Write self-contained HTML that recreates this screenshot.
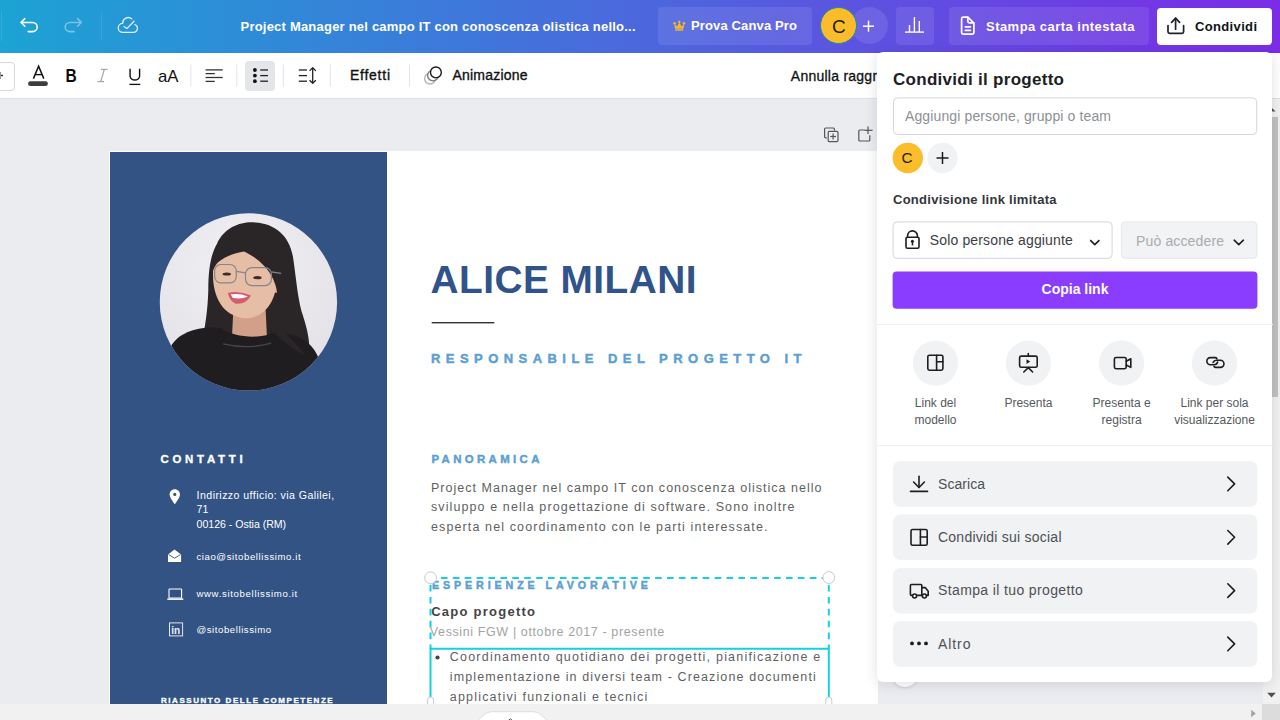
<!DOCTYPE html>
<html><head><meta charset="utf-8">
<style>
*{margin:0;padding:0;box-sizing:border-box}
html,body{width:1280px;height:720px;overflow:hidden;background:#ebecf0;font-family:"Liberation Sans",sans-serif;position:relative}
.a{position:absolute}
.t{position:absolute;white-space:nowrap;line-height:1}
#hdr{left:0;top:0;width:1280px;height:53px;background:linear-gradient(90deg,#1ca3d4 0%,#7b2ce6 100%)}
#tb{left:0;top:53px;width:1280px;height:46px;background:#fff;border-bottom:1px solid #dde1e4}
.hbtn{position:absolute;top:6.8px;height:38px;border-radius:4px;background:rgba(255,255,255,.09)}
.sep{position:absolute;width:1px;background:#e3e4e8}
#page{left:109px;top:151px;width:769px;height:560px;background:#fff}
#blue{left:110px;top:152px;width:277px;height:560px;background:#325383}
#hs{left:0;top:704px;width:1280px;height:16px;background:#f1f1f1}
#vs{left:1263px;top:99px;width:17px;height:605px;background:#f1f1f1}
#panel{left:877px;top:52px;width:395px;height:630px;background:#fff;border-radius:6px;box-shadow:0 2px 14px rgba(30,40,70,.14)}
.row{position:absolute;left:16px;width:364px;height:45px;background:#f1f2f4;border-radius:7px}
.circ{position:absolute;width:45px;height:45px;border-radius:50%;background:#f1f2f4}
.lbl{position:absolute;width:100px;text-align:center;font-size:12px;line-height:17px;color:#555}
</style></head>
<body>
<!-- PAGE -->
<div id="page" class="a"></div>
<div id="blue" class="a"></div>
<svg class="a" style="left:0;top:98px" width="1280" height="606" font-family="Liberation Sans">
 <g transform="translate(0,-98)">
  <!-- canvas icons -->
  <g fill="none" stroke="#555" stroke-width="1.2" stroke-linejoin="round">
    <path d="M826.8 137.8 H825.6 A1 1 0 0 1 824.6 136.8 V129 A1 1 0 0 1 825.6 128 H833.4 A1 1 0 0 1 834.4 129 V130.4"/>
    <rect x="828.2" y="131.4" width="9.8" height="10.2" rx="1"/>
    <line x1="833.1" y1="133.6" x2="833.1" y2="139.4"/><line x1="830.2" y1="136.5" x2="836" y2="136.5"/>
    <path d="M864.6 130 H859.8 A1 1 0 0 0 858.8 131 V140 A1 1 0 0 0 859.8 141 H868.8 A1 1 0 0 0 869.8 140 V135.2"/>
    <line x1="868" y1="126.6" x2="868" y2="134"/><line x1="864.4" y1="130.3" x2="872.6" y2="130.3"/>
  </g>
  <!-- photo -->
  <svg x="155" y="208" width="190" height="190" viewBox="0 0 720 720">
    <defs><clipPath id="pc"><circle cx="354" cy="356" r="336"/></clipPath>
    <radialGradient id="bgg" cx="0.45" cy="0.3" r="0.8"><stop offset="0" stop-color="#f0eff3"/><stop offset="1" stop-color="#e1dfe4"/></radialGradient></defs>
    <g clip-path="url(#pc)">
      <rect width="720" height="720" fill="url(#bgg)"/>
      <path d="M235 135 C265 70 330 50 380 55 C460 60 515 110 525 200 C535 270 540 330 555 390 C575 450 592 510 582 565 C548 600 480 590 450 545 L300 535 C250 565 185 545 182 495 C190 440 200 390 202 310 C202 230 212 175 235 135 Z" fill="#2a2527"/>
      <path d="M298 360 L418 360 L424 485 Q360 505 292 485 Z" fill="#d2a089"/>
      <ellipse cx="461" cy="302" rx="11" ry="19" fill="#d9aa92"/>
      <path d="M220 240 C216 330 252 410 340 418 C414 418 455 355 461 285 C465 210 440 150 360 132 C276 132 224 172 220 240 Z" fill="#e6bda5"/>
      <path d="M214 250 C220 128 298 78 370 74 C442 76 504 132 514 240 C516 300 504 352 476 392 L460 305 C448 250 410 200 338 165 C300 170 262 185 236 208 C226 222 219 236 214 250 Z" fill="#2a2527"/>
            <path d="M452 385 C482 445 522 505 572 562 C562 595 500 592 470 562 C440 522 430 472 452 385 Z" fill="#2a2527"/>
      <path d="M226 352 C214 422 200 482 188 522 C220 545 262 535 272 485 C272 445 252 405 226 352 Z" fill="#2a2527"/>
      <ellipse cx="272" cy="250" rx="16" ry="6" fill="#3d2c2a"/><ellipse cx="388" cy="264" rx="16" ry="6" fill="#3d2c2a"/>
      <g fill="none" stroke="#85868b" stroke-width="4.5"><rect x="226" y="214" width="82" height="70" rx="24"/><rect x="343" y="226" width="98" height="68" rx="24"/><line x1="308" y1="240" x2="343" y2="246"/><line x1="441" y1="242" x2="478" y2="248"/></g>
      <path d="M276 322 Q320 312 364 332 Q346 366 306 363 Q283 353 276 322 Z" fill="#d55b6f"/>
      <path d="M287 327 Q322 322 352 335 Q330 346 295 341 Z" fill="#fafafa"/>
      <path d="M60 525 C90 470 170 445 250 455 C300 492 400 497 452 472 C520 470 592 500 617 562 L662 720 L20 720 Z" fill="#1f1d20"/>
      <path d="M258 515 Q350 537 440 512" fill="none" stroke="#48464a" stroke-width="5"/>
      <path d="M452 472 C482 505 530 540 572 562 C560 540 520 500 470 445 Z" fill="#2a2527"/>
    </g>
  </svg>
  <!-- left column text -->
  <text x="160.5" y="463.1" font-size="11.4" font-weight="bold" fill="#fff" stroke="#fff" stroke-width=".35" textLength="82.1" lengthAdjust="spacing">CONTATTI</text>
  <path d="M174.8 489.2 C171.8 489.2 169.6 491.5 169.6 494.4 C169.6 497.6 174.8 504.2 174.8 504.2 C174.8 504.2 180 497.6 180 494.4 C180 491.5 177.8 489.2 174.8 489.2 Z M174.8 492.8 A1.6 1.6 0 1 1 174.8 496 A1.6 1.6 0 1 1 174.8 492.8 Z" fill="#fff" fill-rule="evenodd"/>
  <g font-size="10.6" fill="#fff">
    <text x="196.6" y="499" textLength="137.5" lengthAdjust="spacing">Indirizzo ufficio: via Galilei,</text>
    <text x="196.6" y="512.6">71</text>
    <text x="196.6" y="527.8" textLength="89.5" lengthAdjust="spacing">00126 - Ostia (RM)</text>
  </g>
  <g font-size="9.6" fill="#fff">
    <text x="196.4" y="560.4" textLength="104.3" lengthAdjust="spacing">ciao@sitobellissimo.it</text>
    <text x="196.4" y="596.6" textLength="100.8" lengthAdjust="spacing">www.sitobellissimo.it</text>
    <text x="196.4" y="632.6" textLength="74.8" lengthAdjust="spacing">@sitobellissimo</text>
  </g>
  <path d="M168 554.4 L174.55 549.5 L181.1 554.4 V561.9 H168 Z" fill="#fff"/>
  <path d="M168.6 554.6 L174.55 558.2 L180.5 554.6" fill="none" stroke="#325383" stroke-width="0.9"/>
  <g fill="none" stroke="#fff" stroke-width="1.1"><rect x="169" y="589" width="12.6" height="9" rx=".6"/></g>
  <rect x="167.3" y="598.4" width="16" height="1.5" fill="#fff"/>
  <rect x="169.5" y="622.9" width="13.1" height="13" fill="none" stroke="#fff" stroke-width="1" opacity=".85"/>
  <text x="171.3" y="633.8" font-size="10" font-weight="bold" fill="#fff" opacity=".9">in</text>
  <text x="161" y="703.2" font-size="8" font-weight="bold" fill="#fff" stroke="#fff" stroke-width=".35" textLength="171.7" lengthAdjust="spacing">RIASSUNTO DELLE COMPETENZE</text>
  <!-- right column -->
  <text x="430.5" y="292.6" font-size="38.8" font-weight="bold" fill="#30538a" textLength="266" lengthAdjust="spacing">ALICE MILANI</text>
  <rect x="431.7" y="322" width="62.6" height="1.4" fill="#333"/>
  <text x="431" y="362.9" font-size="13" font-weight="bold" fill="#5b9fd3" stroke="#5b9fd3" stroke-width=".45" textLength="370.5" lengthAdjust="spacing">RESPONSABILE DEL PROGETTO IT</text>
  <text x="431.5" y="463" font-size="11.4" font-weight="bold" fill="#5b9fd3" stroke="#5b9fd3" stroke-width=".45" textLength="107.9" lengthAdjust="spacing">PANORAMICA</text>
  <g font-size="12.5" fill="#5f5f5f">
    <text x="431" y="491.6" textLength="390.5" lengthAdjust="spacing">Project Manager nel campo IT con conoscenza olistica nello</text>
    <text x="431" y="511.4" textLength="363.5" lengthAdjust="spacing">sviluppo e nella progettazione di software. Sono inoltre</text>
    <text x="431" y="530.9" textLength="336.5" lengthAdjust="spacing">esperta nel coordinamento con le parti interessate.</text>
  </g>
  <text x="432" y="588.8" font-size="10.7" font-weight="bold" fill="#5b9fd3" stroke="#5b9fd3" stroke-width=".45" textLength="215.8" lengthAdjust="spacing">ESPERIENZE LAVORATIVE</text>
  <text x="431.2" y="616.1" font-size="13" font-weight="bold" fill="#444" textLength="103.8" lengthAdjust="spacing">Capo progetto</text>
  <text x="429.8" y="636.4" font-size="12.5" fill="#a3a3a3" textLength="234.5" lengthAdjust="spacing">Vessini FGW | ottobre 2017 - presente</text>
  <circle cx="437.5" cy="657.5" r="2.1" fill="#444"/>
  <g font-size="12.5" fill="#5f5f5f">
    <text x="449.8" y="661.4" textLength="370.5" lengthAdjust="spacing">Coordinamento quotidiano dei progetti, pianificazione e</text>
    <text x="449.8" y="681.4" textLength="366" lengthAdjust="spacing">implementazione in diversi team - Creazione documenti</text>
    <text x="449.8" y="700.5" textLength="197.5" lengthAdjust="spacing">applicativi funzionali e tecnici</text>
  </g>
  <!-- selection -->
  <g stroke="#13d2df" stroke-width="2" fill="none">
    <line x1="430.6" y1="577.9" x2="828.8" y2="577.9" stroke-dasharray="6.6 5.3" stroke-dashoffset="1.6"/>
    <line x1="430.5" y1="577.8" x2="430.5" y2="648.8" stroke-dasharray="6.6 5.3" stroke-dashoffset="4.7"/>
    <line x1="828.8" y1="577.8" x2="828.8" y2="648.8" stroke-dasharray="6.6 5.3" stroke-dashoffset="4.7"/>
    <line x1="430.5" y1="648.8" x2="828.8" y2="648.8"/>
    <line x1="430.5" y1="648" x2="430.5" y2="700"/>
    <line x1="828.8" y1="648" x2="828.8" y2="700"/>
  </g>
  <g fill="#fff" stroke="#c9cbd0" stroke-width="1">
    <circle cx="430.6" cy="577.8" r="5.9"/><circle cx="828.8" cy="577.6" r="5.9"/>
    <rect x="427.6" y="697" width="6" height="12" rx="3"/><rect x="825.8" y="697" width="6" height="12" rx="3"/>
  </g>
 </g>
</svg>

<!-- SCROLLBARS -->
<div id="hs" class="a"></div>
<div id="vs" class="a"></div>
<div class="a" style="left:1265px;top:116.5px;width:13px;height:280px;background:#c1c1c1"></div>
<div class="a" style="left:1262px;top:704px;width:18px;height:16px;background:#dcdcdc"></div>
<svg class="a" style="left:1240px;top:98px" width="40" height="622">
  <path d="M1267.4 111.6 L1271.5 107.4 L1275.6 111.6 Z" transform="translate(-1240,-98)" fill="#505050"/>
  <path d="M1267.2 692.8 L1275.8 692.8 L1271.5 697.6 Z" transform="translate(-1240,-98)" fill="#505050"/>
  <path d="M1251.2 709.8 L1255.8 713.5 L1251.2 717.2 Z" transform="translate(-1240,-98)" fill="#a3a3a3"/>
</svg>
<svg class="a" style="left:470px;top:705px" width="85" height="15"><path d="M7.5 15.5 L12.5 11 Q16.5 6.7 21.5 6.7 H63.5 Q68.5 6.7 72.5 11 L77 15.5" fill="#fff" stroke="#dcdde0" stroke-width="1"/><path d="M38.4 15.4 L40.4 13.8 L42.4 15.4" fill="none" stroke="#555" stroke-width="1"/></svg>
<div class="a" style="left:892px;top:661px;width:26px;height:26px;border-radius:50%;background:#fff;box-shadow:0 1px 3px rgba(0,0,0,.15)"></div>

<!-- TOOLBAR -->
<div id="tb" class="a"></div>
<div class="a" style="left:-10px;top:61.5px;width:25px;height:29.5px;border:1px solid #d5d8dc;border-radius:4px"></div>
<div class="a" style="left:245px;top:61px;width:30px;height:30px;border-radius:4px;background:#e4e6ea"></div>
<svg class="a" style="left:0;top:53px" width="900" height="45" font-family="Liberation Sans">
 <g transform="translate(0,-53)">
  <g stroke="#222" stroke-width="1.4"><line x1="-1" y1="75.5" x2="3" y2="75.5"/><line x1="0.3" y1="72" x2="0.3" y2="79" stroke="#999"/></g>
  <path d="M33.4 78.6 L38.6 66.3 L43.8 78.6" fill="none" stroke="#111" stroke-width="1.5"/>
  <line x1="35.2" y1="74.6" x2="42" y2="74.6" stroke="#111" stroke-width="1.4"/>
  <rect x="28.1" y="81.3" width="19.8" height="4.7" rx="2.35" fill="#3d3d3b"/>
  <text x="65.4" y="82.3" font-size="18.2" font-weight="bold" fill="#0b0b0b" textLength="11.2" lengthAdjust="spacingAndGlyphs">B</text>
  <g stroke="#a8a8a8" stroke-width="1.3" fill="none"><line x1="101" y1="69.4" x2="107.6" y2="69.4"/><line x1="97.4" y1="81.6" x2="104" y2="81.6"/><line x1="104.3" y1="69.4" x2="100.7" y2="81.6"/></g>
  <path d="M130.1 68.8 V76.6 A5 5 0 0 0 139.6 76.6 V68.8" fill="none" stroke="#111" stroke-width="1.4"/>
  <line x1="129.4" y1="84.4" x2="140.3" y2="84.4" stroke="#111" stroke-width="1.3"/>
  <text x="158" y="82.2" font-size="17" fill="#111" textLength="20.5" lengthAdjust="spacingAndGlyphs">aA</text>
  <g stroke="#e3e4e8" stroke-width="1"><line x1="190.8" y1="64.5" x2="190.8" y2="86.5"/><line x1="236.8" y1="64.5" x2="236.8" y2="86.5"/><line x1="283.4" y1="64.5" x2="283.4" y2="86.5"/><line x1="330.3" y1="64.5" x2="330.3" y2="86.5"/><line x1="409.6" y1="64.5" x2="409.6" y2="86.5"/></g>
  <g stroke="#333" stroke-width="1.3"><line x1="205.6" y1="69.9" x2="222.7" y2="69.9"/><line x1="205.6" y1="73.6" x2="214.8" y2="73.6"/><line x1="205.6" y1="77.5" x2="222.7" y2="77.5"/><line x1="205.6" y1="81.4" x2="214.8" y2="81.4"/></g>
  <g fill="#111"><circle cx="254.9" cy="70" r="1.9"/><circle cx="254.9" cy="75.6" r="1.9"/><circle cx="254.9" cy="81.2" r="1.9"/></g>
  <g stroke="#222" stroke-width="1.3"><line x1="260.2" y1="70" x2="268" y2="70"/><line x1="260.2" y1="75.6" x2="268" y2="75.6"/><line x1="260.2" y1="81.2" x2="268" y2="81.2"/></g>
  <g stroke="#222" stroke-width="1.3" fill="none" stroke-linejoin="round"><line x1="298.8" y1="70" x2="307" y2="70"/><line x1="298.8" y1="75.6" x2="307" y2="75.6"/><line x1="298.8" y1="81.2" x2="307" y2="81.2"/>
   <line x1="312.7" y1="68" x2="312.7" y2="83"/><path d="M309.6 70.9 L312.7 67.8 L315.8 70.9"/><path d="M309.6 80.2 L312.7 83.3 L315.8 80.2"/></g>
  <text x="350" y="80.4" font-size="14" fill="#111" stroke="#111" stroke-width=".35" textLength="40" lengthAdjust="spacing">Effetti</text>
  <g fill="none" stroke-width="1.35"><circle cx="430" cy="78.6" r="5.4" stroke="#b3b3b3"/><circle cx="433" cy="75.5" r="5.4" fill="#fff" stroke="#7a7a7a"/><circle cx="435.9" cy="72.4" r="6.2" fill="#fff" stroke="none"/><circle cx="435.9" cy="72.4" r="5.4" stroke="#151515"/></g>
  <text x="452.5" y="80.4" font-size="14" fill="#111" stroke="#111" stroke-width=".35" textLength="75" lengthAdjust="spacing">Animazione</text>
  <text x="790.8" y="80.5" font-size="14" fill="#111" stroke="#111" stroke-width=".3" letter-spacing=".25">Annulla raggruppamento</text>
 </g>
</svg>

<!-- HEADER -->
<div id="hdr" class="a"></div>
<div class="hbtn" style="left:658px;width:154px"></div>
<div class="a" style="left:851px;top:7px;width:37px;height:37px;border-radius:50%;background:rgba(255,255,255,.1)"></div>
<div class="a" style="left:820px;top:7px;width:37px;height:37px;border-radius:50%;background:#fbbc2c;border:1.5px solid #168da2"></div>
<div class="hbtn" style="left:895.5px;width:38px"></div>
<div class="hbtn" style="left:948.5px;width:200px"></div>
<div class="a" style="left:1157px;top:7.5px;width:115px;height:37px;border-radius:4px;background:#fff"></div>
<svg class="a" style="left:0;top:0" width="1280" height="53" font-family="Liberation Sans">
  <g stroke="rgba(255,255,255,.1)" stroke-width="1"><line x1="1.5" y1="11" x2="1.5" y2="41"/><line x1="101.5" y1="11" x2="101.5" y2="41"/></g>
  <g fill="none" stroke="#fff" stroke-width="1.55" stroke-linecap="round" stroke-linejoin="round">
    <path d="M21.2 22.4 H32.6 A4.6 4.6 0 0 1 32.6 31.6 H28.2"/><path d="M24.8 18.6 L21.2 22.4 L24.8 26.2"/>
    <g opacity=".4"><path d="M81.2 22.4 H69.8 A4.6 4.6 0 0 0 69.8 31.6 H74.2"/><path d="M77.6 18.6 L81.2 22.4 L77.6 26.2"/></g>
    <g opacity=".85"><path stroke-width="1.3" d="M134.8 24.5 A4.1 4.1 0 0 1 133.2 32.4 H122.3 A4.5 4.5 0 0 1 122.7 23.42 A5.6 5.6 0 0 1 131.9 18.9"/>
    <path stroke-width="1.3" d="M124 26.4 L126.9 28.6 L134 21.2"/></g>
  </g>
  <text x="240.5" y="31" fill="#fff" font-weight="bold" font-size="13" textLength="395" lengthAdjust="spacing">Project Manager nel campo IT con conoscenza olistica nello...</text>
  <g fill="#f6b82c">
    <path d="M674.2 23.4 L677 26.6 L679.3 22.4 L681.6 26.6 L684.4 23.4 L683.5 28.7 H675.1 Z"/>
    <circle cx="674.6" cy="23.3" r="1.2"/><circle cx="679.3" cy="21.9" r="1.2"/><circle cx="684" cy="23.3" r="1.2"/>
    <rect x="675.3" y="29.2" width="8" height="1.6" fill="#e7ae45"/>
  </g>
  <text x="691" y="30.4" fill="#fff" font-weight="bold" font-size="13" textLength="106" lengthAdjust="spacing">Prova Canva Pro</text>
  <text x="832" y="32.8" fill="#1b1b1b" font-size="19">C</text>
  <g stroke="#fff" stroke-width="1.5" fill="none"><line x1="863" y1="26.2" x2="874" y2="26.2"/><line x1="868.5" y1="20.7" x2="868.5" y2="31.7"/></g>
  <g stroke="#fff" stroke-width="1.4" fill="none"><line x1="905" y1="32.1" x2="924" y2="32.1"/><line x1="909.5" y1="25" x2="909.5" y2="32"/><line x1="914.4" y1="17.2" x2="914.4" y2="32"/><line x1="919.3" y1="21" x2="919.3" y2="32"/></g>
  <g stroke="#fff" stroke-width="1.7" fill="none" stroke-linejoin="round" stroke-linecap="round">
    <path d="M967.8 17.1 H963.2 A1.6 1.6 0 0 0 961.6 18.7 V32.5 A1.6 1.6 0 0 0 963.2 34.1 H972.3 A1.6 1.6 0 0 0 973.9 32.5 V23.2 Z"/>
    <path d="M967.8 17.3 V21.3 A1.6 1.6 0 0 0 969.4 22.9 H973.7"/>
    <line x1="965.3" y1="26.8" x2="970.4" y2="26.8"/><line x1="965.3" y1="30.4" x2="970.4" y2="30.4"/>
  </g>
  <text x="986" y="30.5" fill="#fff" font-weight="bold" font-size="13" textLength="148.5" lengthAdjust="spacing">Stampa carta intestata</text>
  <g stroke="#1e2227" stroke-width="1.7" fill="none" stroke-linejoin="round" stroke-linecap="round">
    <path d="M1168 25.6 V31.8 A1.6 1.6 0 0 0 1169.6 33.4 H1182 A1.6 1.6 0 0 0 1183.6 31.8 V25.6"/>
    <line x1="1175.6" y1="18.3" x2="1175.6" y2="29.2"/><path d="M1171.6 22.3 L1175.6 18.2 L1179.6 22.3"/>
  </g>
  <text x="1195" y="30.5" fill="#0e1318" font-weight="bold" font-size="13" textLength="62" lengthAdjust="spacing">Condividi</text>
</svg>

<!-- PANEL -->
<div id="panel" class="a"></div>
<svg class="a" style="left:877px;top:52px" width="396" height="631" font-family="Liberation Sans">
 <g transform="translate(-877,-52)">
  <text x="893" y="85.3" font-size="17" font-weight="bold" fill="#1d2024" textLength="171" lengthAdjust="spacing">Condividi il progetto</text>
  <rect x="893.5" y="97.9" width="363.2" height="36.6" rx="4" fill="#fff" stroke="#d3d6da" stroke-width="1"/>
  <text x="905" y="120.8" font-size="14" fill="#8d9095" textLength="206" lengthAdjust="spacing">Aggiungi persone, gruppi o team</text>
  <circle cx="907.8" cy="158" r="15.2" fill="#fbbd2c"/>
  <text x="901.6" y="163.4" font-size="15.2" fill="#1e1e1e">C</text>
  <circle cx="942.5" cy="158" r="15.2" fill="#f1f2f4"/>
  <g stroke="#1b1b1b" stroke-width="1.5"><line x1="936.5" y1="158" x2="948.5" y2="158"/><line x1="942.5" y1="152" x2="942.5" y2="164"/></g>
  <text x="893" y="203.7" font-size="13" font-weight="bold" fill="#33363a" textLength="163.5" lengthAdjust="spacing">Condivisione link limitata</text>
  <rect x="893.1" y="221.9" width="219" height="36.4" rx="4" fill="#fff" stroke="#d3d6da" stroke-width="1"/>
  <g fill="none" stroke="#1e1e1e" stroke-width="1.6" stroke-linejoin="round">
    <rect x="906" y="237.2" width="13" height="11" rx="1.4"/>
    <path d="M907.6 237 V235.8 A4.9 4.9 0 0 1 917.4 235.8 V237"/>
    <path d="M1090.2 240.2 L1094.8 244.6 L1099.4 240.2"/>
  </g>
  <circle cx="912.4" cy="241.3" r="1.5" fill="#1e1e1e"/><rect x="911.7" y="241.5" width="1.5" height="4" fill="#1e1e1e"/>
  <text x="929.8" y="245.1" font-size="14" fill="#3b3e42" textLength="143" lengthAdjust="spacing">Solo persone aggiunte</text>
  <rect x="1121.4" y="221.9" width="135.6" height="36.4" rx="4" fill="#f2f3f5" stroke="#e6e7ea" stroke-width="1"/>
  <text x="1136" y="245.5" font-size="14" fill="#a9abaf" textLength="88" lengthAdjust="spacing">Può accedere</text>
  <path d="M1234.2 240.2 L1238.8 244.6 L1243.4 240.2" fill="none" stroke="#1e1e1e" stroke-width="1.6" stroke-linejoin="round" stroke-linecap="round"/>
  <rect x="892.6" y="271.4" width="364.8" height="37.3" rx="4" fill="#8b3dff"/>
  <text x="1075" y="294.3" font-size="14" font-weight="bold" fill="#fff" text-anchor="middle">Copia link</text>
  <rect x="877" y="324" width="396" height="1" fill="#eeeff1"/>
  <g fill="#f1f2f4"><circle cx="935.5" cy="363.2" r="22.6"/><circle cx="1028.4" cy="363.2" r="22.6"/><circle cx="1121.6" cy="363.2" r="22.6"/><circle cx="1214.5" cy="363.2" r="22.6"/></g>
  <g fill="none" stroke="#1e1e1e" stroke-width="1.6" stroke-linejoin="round" stroke-linecap="round">
    <rect x="927.8" y="355.2" width="15.1" height="15" rx="1.6"/><line x1="936.6" y1="355.2" x2="936.6" y2="370.2"/><line x1="936.6" y1="361.8" x2="942.9" y2="361.8"/>
    <rect x="1019.6" y="356.1" width="17.6" height="11.2" rx="1.6"/><line x1="1028.3" y1="353.6" x2="1028.3" y2="356"/><path d="M1023.8 372 L1028.3 367.6 L1032.6 372"/>
    <rect x="1114.4" y="357.5" width="11.8" height="11.2" rx="1.6"/><path d="M1126.2 361.2 L1130.8 358.8 V367.4 L1126.2 365"/>
    <path d="M1216.9 358.8 A1.6 1.6 0 0 0 1215.5 357.6 H1210.4 A3.55 3.55 0 0 0 1210.4 364.7 H1214.2 A3.5 3.5 0 0 0 1217.6 362"/><path d="M1213.1 362.4 A3.5 3.5 0 0 1 1216.4 360.3 H1220.4 A3.55 3.55 0 0 1 1220.4 367.4 H1215.4 A1.6 1.6 0 0 1 1214 366.4"/>
  </g>
  <path d="M1026.5 359.3 L1030.2 361.6 L1026.5 363.9 Z" fill="#1e1e1e"/>
  <g font-size="12" fill="#55585c" text-anchor="middle">
    <text x="935.5" y="406.6">Link del</text><text x="935.5" y="423.7">modello</text>
    <text x="1028.4" y="406.6">Presenta</text>
    <text x="1121.6" y="406.6">Presenta e</text><text x="1121.6" y="423.7">registra</text>
    <text x="1214.5" y="406.6">Link per sola</text><text x="1214.5" y="423.7">visualizzazione</text>
  </g>
  <rect x="877" y="445" width="396" height="1" fill="#eeeff1"/>
  <g fill="#f1f2f4"><rect x="893" y="461.2" width="364.3" height="45.5" rx="7"/><rect x="893" y="514.6" width="364.3" height="45.5" rx="7"/><rect x="893" y="567.9" width="364.3" height="45.5" rx="7"/><rect x="893" y="621.2" width="364.3" height="45.5" rx="7"/></g>
  <g fill="none" stroke="#1e1e1e" stroke-width="1.6" stroke-linejoin="round" stroke-linecap="round">
    <path d="M1227.8 477.1 L1234.6 483.9 L1227.8 490.7"/><path d="M1227.8 530.5 L1234.6 537.3 L1227.8 544.1"/><path d="M1227.8 583.8 L1234.6 590.6 L1227.8 597.4"/><path d="M1227.8 637.1 L1234.6 643.9 L1227.8 650.7"/>
    <line x1="919" y1="476.3" x2="919" y2="487.4"/><path d="M913.6 482 L919 487.5 L924.4 482"/><line x1="910.5" y1="491.4" x2="927.5" y2="491.4"/>
    <rect x="911" y="529.5" width="16.2" height="15.8" rx="1.6"/><line x1="920.4" y1="529.5" x2="920.4" y2="545.3"/><line x1="920.4" y1="537" x2="927.2" y2="537"/>
    <path d="M912.3 595.4 H911.4 A1 1 0 0 1 910.4 594.4 V585.5 A1 1 0 0 1 911.4 584.5 H920.8 A1 1 0 0 1 921.8 585.5 V595.4 H917.4 M921.8 587.6 H925.2 L928.2 591.2 V595.4 H926.8"/>
    <circle cx="914.6" cy="596" r="2"/><circle cx="924.4" cy="596" r="2"/>
  </g>
  <g fill="#1e1e1e"><circle cx="912" cy="643.4" r="1.9"/><circle cx="919" cy="643.4" r="1.9"/><circle cx="926" cy="643.4" r="1.9"/></g>
  <g font-size="14" fill="#4d5054">
    <text x="938" y="488.7" textLength="47" lengthAdjust="spacing">Scarica</text>
    <text x="938" y="542" textLength="123.5" lengthAdjust="spacing">Condividi sui social</text>
    <text x="938" y="595.3" textLength="144.8" lengthAdjust="spacing">Stampa il tuo progetto</text>
    <text x="938" y="648.6" textLength="32.5" lengthAdjust="spacing">Altro</text>
  </g>
 </g>
</svg>

</body></html>
